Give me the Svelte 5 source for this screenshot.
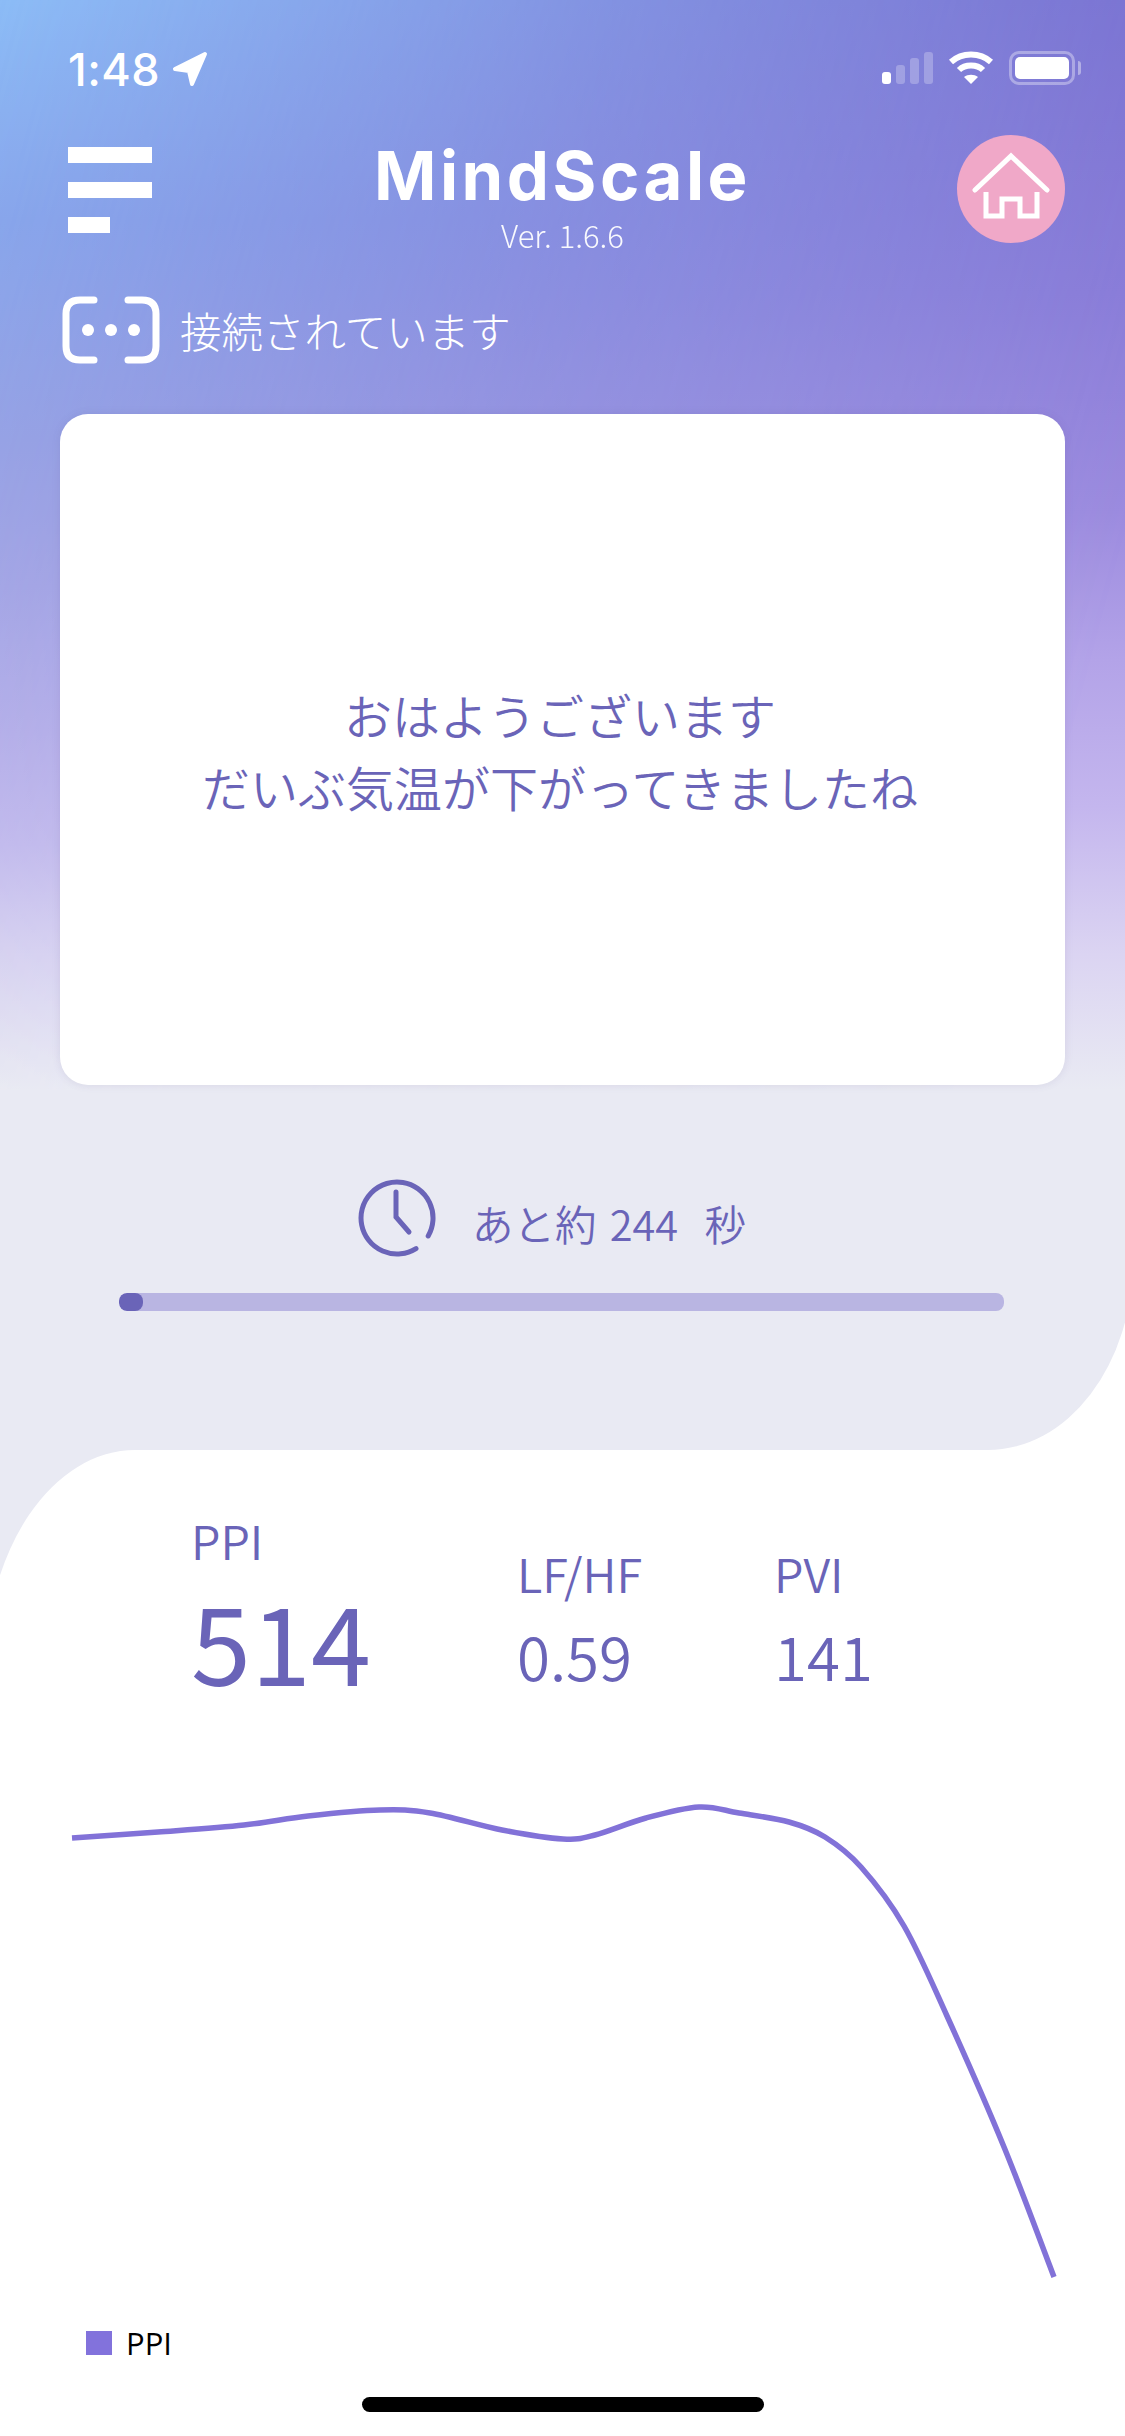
<script>
  const stats = [
    { label: 'LF/HF', value: '0.59' },
    { label: 'PVI', value: '141' }
  ];

  // chart samples, smoothed to a curve below
  const points = [
    [72, 43], [158, 37], [244, 30], [308, 21], [380, 15], [430, 18], [502, 35],
    [563, 44], [595, 40], [646, 23], [699, 12], [739, 18], [789, 27], [825, 42],
    [861, 72], [904, 131], [947, 221], [1004, 352], [1054, 482]
  ];

  function smooth(pts) {
    let d = `M${pts[0][0]} ${pts[0][1]}`;
    for (let i = 0; i < pts.length - 1; i++) {
      const p0 = pts[Math.max(i - 1, 0)];
      const p1 = pts[i];
      const p2 = pts[i + 1];
      const p3 = pts[Math.min(i + 2, pts.length - 1)];
      const c1x = p1[0] + (p2[0] - p0[0]) / 6;
      const c1y = p1[1] + (p2[1] - p0[1]) / 6;
      const c2x = p2[0] - (p3[0] - p1[0]) / 6;
      const c2y = p2[1] - (p3[1] - p1[1]) / 6;
      d += ` C${c1x} ${c1y} ${c2x} ${c2y} ${p2[0]} ${p2[1]}`;
    }
    return d;
  }

  const linePath = smooth(points);
  const progress = 2.7;
</script>

<div class="phone">
  <div class="top">
    <div class="status">
      <div class="status-left">
        <span class="time">1:48</span>
        <svg class="arrow" width="36" height="36" viewBox="0 0 36 36">
          <path d="M33 3 L3 18 L17 20 L20 33 Z" fill="#fff" stroke="#fff" stroke-width="4" stroke-linejoin="round" />
        </svg>
      </div>
      <div class="status-right">
        <div class="signal">
          <i class="on"></i><i></i><i></i><i></i>
        </div>
        <svg width="46" height="34" viewBox="0 0 46 34" fill="none" stroke="#fff" stroke-width="6">
          <path d="M3 11 C14 1 32 1 43 11" />
          <path d="M11 19 C17 13 29 13 35 19" />
          <path d="M23 33 L16 26 C20 23 26 23 30 26 Z" fill="#fff" stroke="none" />
        </svg>
        <div class="battery"><div class="battery-fill"></div></div>
        <div class="battery-tip"></div>
      </div>
    </div>

    <header class="header">
      <div class="menu">
        <span></span><span></span><span class="short"></span>
      </div>
      <div class="brand">
        <div class="logo">MindScale</div>
        <div class="version">Ver. 1.6.6</div>
      </div>
      <div class="home">
        <svg width="108" height="108" viewBox="0 0 108 108" fill="none" stroke="#fff" stroke-width="5">
          <path d="M18 55 L54 21 L90 55" stroke-linecap="round" />
          <path d="M29 57 V81 H45 V64 H63 V81 H80 V57" />
        </svg>
      </div>
    </header>

    <div class="conn">
      <svg width="98" height="68" viewBox="0 0 98 68" fill="none" stroke="#fff" stroke-width="7" stroke-linecap="round">
        <path d="M32 4 H18 Q4 4 4 18 V50 Q4 64 18 64 H32" />
        <path d="M66 4 H80 Q94 4 94 18 V50 Q94 64 80 64 H66" />
        <circle cx="26" cy="34" r="6" fill="#fff" stroke="none" />
        <circle cx="49" cy="34" r="6" fill="#fff" stroke="none" />
        <circle cx="72" cy="34" r="6" fill="#fff" stroke="none" />
      </svg>
      <span>接続されています</span>
    </div>

    <div class="card">
      <p>おはようございます</p>
      <p>だいぶ気温が下がってきましたね</p>
    </div>

    <div class="timer">
      <svg width="78" height="78" viewBox="0 0 78 78" fill="none" stroke="#6a64b8" stroke-width="5" stroke-linecap="round">
        <path d="M70.2 57 A36 36 0 1 0 58 69.6" />
        <path d="M38 13 V38 L51 53" />
      </svg>
      <span>あと約 244&nbsp;&nbsp;秒</span>
    </div>

    <div class="track">
      <div class="fill" style="width: {progress}%"></div>
    </div>
  </div>

  <section class="panel">
    <div class="notch"><div class="notch-inner"></div></div>

    <div class="stats">
      <div class="stat main">
        <div class="stat-label">PPI</div>
        <div class="stat-value">514</div>
      </div>
      {#each stats as s}
        <div class="stat">
          <div class="stat-label">{s.label}</div>
          <div class="stat-value">{s.value}</div>
        </div>
      {/each}
    </div>

    <svg class="chart" width="1125" height="500" viewBox="0 0 1125 500">
      <path d={linePath} fill="none" stroke="#8272d8" stroke-width="5.5" />
    </svg>

    <div class="legend">
      <i></i><span>PPI</span>
    </div>

    <div class="home-bar"></div>
  </section>
</div>

<style>
  :global(body) {
    margin: 0;
    background: #fff;
  }

  .phone {
    position: relative;
    width: 1125px;
    height: 2436px;
    overflow: hidden;
    display: flex;
    flex-direction: column;
    font-family: "Noto Sans CJK JP", "Noto Sans", sans-serif;
    background: linear-gradient(180deg, #7a6dcf 0, #8a7bd8 293px, #9c8bdf 513px, #b3a3e8 660px, #c4b6ee 807px, #dbd4f2 954px, #e9eaf3 1090px);
  }

  /* blue wash from the left, same vertical fade as the base */
  .phone::before {
    content: "";
    position: absolute;
    left: 0;
    top: 0;
    width: 100%;
    height: 1090px;
    background: linear-gradient(180deg, #8cbcf6 0, #88a8ec 220px, #96a5e5 440px, #a3a8e5 587px, #b3b0e8 734px, #c0baec 844px, #d5d1f0 954px, #e9eaf3 1090px);
    -webkit-mask-image: linear-gradient(105deg, #000 0, rgba(0, 0, 0, 0.45) 45%, transparent 90%);
    mask-image: linear-gradient(105deg, #000 0, rgba(0, 0, 0, 0.45) 45%, transparent 90%);
  }

  .top {
    position: relative;
    z-index: 2;
    height: 1450px;
    flex-shrink: 0;
    display: flex;
    flex-direction: column;
  }

  .status {
    height: 135px;
    box-sizing: border-box;
    padding: 50px 44px 0 68px;
    display: flex;
    justify-content: space-between;
    align-items: flex-start;
  }

  .status-left {
    display: flex;
    align-items: center;
    gap: 12px;
    height: 38px;
  }

  .time {
    font-family: Inter, sans-serif;
    font-size: 45px;
    font-weight: 500;
    color: #fff;
    letter-spacing: 0.5px;
  }

  .status-right {
    display: flex;
    align-items: center;
    height: 36px;
  }

  .signal {
    display: flex;
    align-items: flex-end;
    gap: 5px;
    height: 32px;
    margin-right: 15px;
  }

  .signal i {
    width: 9px;
    border-radius: 3px;
    background: rgba(255, 255, 255, 0.25);
  }

  .signal i:nth-child(1) { height: 12px; background: #fff; }
  .signal i:nth-child(2) { height: 19px; }
  .signal i:nth-child(3) { height: 26px; }
  .signal i:nth-child(4) { height: 32px; }

  .battery {
    width: 66px;
    height: 34px;
    margin-left: 15px;
    box-sizing: border-box;
    border: 3px solid rgba(255, 255, 255, 0.35);
    border-radius: 10px;
    padding: 3px;
  }

  .battery-fill {
    height: 100%;
    background: #fff;
    border-radius: 5px;
  }

  .battery-tip {
    width: 3px;
    height: 14px;
    margin-left: 3px;
    background: rgba(255, 255, 255, 0.4);
    border-radius: 0 3px 3px 0;
  }

  .header {
    height: 108px;
    padding: 0 60px 0 68px;
    display: grid;
    grid-template-columns: 108px 1fr 108px;
  }

  .menu {
    padding-top: 12px;
    display: flex;
    flex-direction: column;
    gap: 19px;
  }

  .menu span {
    display: block;
    width: 84px;
    height: 16px;
    background: #fff;
  }

  .menu .short {
    width: 42px;
  }

  .brand {
    text-align: center;
    color: #fff;
    padding-right: 8px;
  }

  .logo {
    font-family: Inter, sans-serif;
    font-size: 67px;
    font-weight: 700;
    line-height: 82px;
    letter-spacing: 3.5px;
  }

  .version {
    font-size: 31px;
    line-height: 36px;
    font-weight: 300;
    opacity: 0.95;
  }

  .home {
    width: 108px;
    height: 108px;
    border-radius: 50%;
    background: #f0a8c8;
  }

  .conn {
    margin-top: 53px;
    padding-left: 62px;
    height: 68px;
    display: flex;
    align-items: center;
    gap: 20px;
    color: #fff;
    font-size: 41.5px;
    font-weight: 300;
  }

  .card {
    margin: 50px 60px 0;
    height: 671px;
    flex-shrink: 0;
    box-sizing: border-box;
    padding-right: 5px;
    background: #fff;
    border-radius: 28px;
    box-shadow: 0 0 8px rgba(90, 80, 140, 0.12);
    display: flex;
    flex-direction: column;
    justify-content: center;
    align-items: center;
    color: #6a64b8;
    font-size: 48px;
    line-height: 72px;
    font-weight: 350;
  }

  .card p {
    margin: 0;
  }

  .timer {
    margin-top: 94px;
    height: 78px;
    padding-left: 358px;
    display: flex;
    align-items: center;
    gap: 36px;
    color: #6a64b8;
    font-size: 41.5px;
    font-weight: 350;
  }

  .timer span {
    position: relative;
    top: 5px;
    word-spacing: 4px;
  }

  .track {
    margin: 36px 121px 0 119px;
    height: 18px;
    border-radius: 8px;
    background: #b9b5e2;
    overflow: hidden;
  }

  .fill {
    height: 100%;
    background: #6a64b8;
    border-radius: 8px;
  }

  .panel {
    position: relative;
    z-index: 1;
    flex: 1;
    margin-left: -15px;
    padding-left: 15px;
    background: #fff;
    border-top-left-radius: 150px 222px;
    display: flex;
    flex-direction: column;
  }

  /* concave corner over the grey area, top right */
  .notch {
    position: absolute;
    right: -8px;
    top: -190px;
    width: 145px;
    height: 190px;
    background: #fff;
  }

  .notch-inner {
    width: 100%;
    height: 100%;
    background: #e9eaf3;
    border-bottom-right-radius: 145px 190px;
  }

  .stats {
    height: 254px;
    box-sizing: border-box;
    padding: 0 0 0 191px;
    display: flex;
    align-items: flex-end;
    color: #6a64b8;
    font-weight: 350;
  }

  .stat {
    width: 257px;
    padding-bottom: 7px;
  }

  .stat-label {
    font-size: 47px;
    line-height: 60px;
  }

  .stat-value {
    font-size: 60px;
    line-height: 84px;
    margin-top: 10px;
  }

  .stat.main {
    width: 326px;
    padding-bottom: 0;
  }

  .stat.main .stat-label {
    margin-bottom: 4px;
  }

  .stat.main .stat-value {
    font-size: 108px;
    line-height: 130px;
    font-weight: 400;
    margin-top: 0;
  }

  .chart {
    display: block;
    margin-top: 91px;
    flex-shrink: 0;
  }

  .legend {
    margin-top: 33px;
    padding-left: 86px;
    display: flex;
    align-items: center;
    gap: 14px;
    height: 30px;
    color: #000;
    font-family: "Open Sans", sans-serif;
    font-size: 31px;
  }

  .legend i {
    width: 26px;
    height: 24px;
    background: #8272dc;
  }

  .home-bar {
    width: 402px;
    height: 15px;
    margin: 39px auto 0;
    background: #000;
    border-radius: 8px;
  }
</style>
